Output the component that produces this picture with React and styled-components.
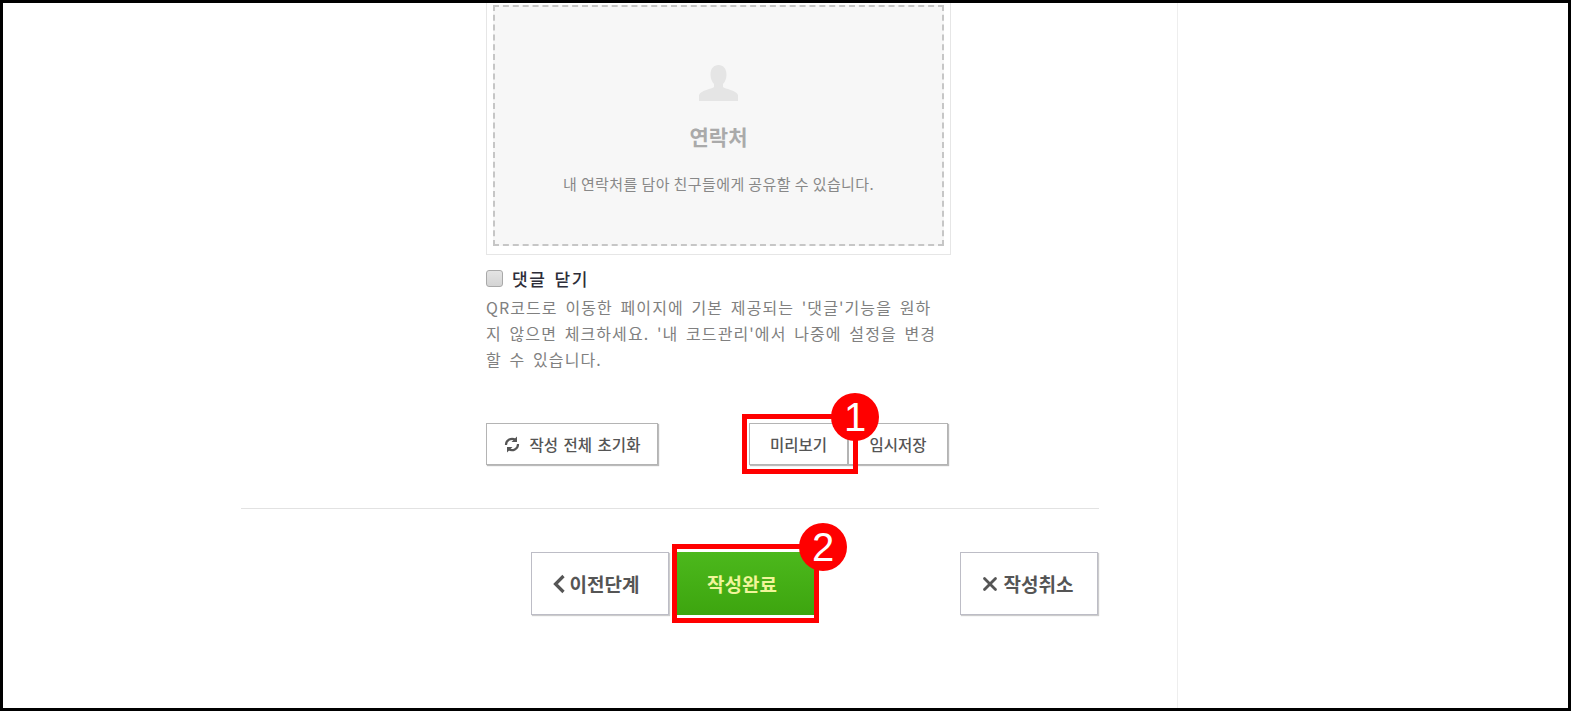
import React from "react";
import styled, { createGlobalStyle } from "styled-components";
import { X } from "lucide-react";

const Global = createGlobalStyle`
  html, body { margin: 0; padding: 0; background: #fff; }
  body { font-family: "Noto Sans CJK KR", "Noto Sans", sans-serif; }
`;
const Frame = styled.div`
  position: relative; box-sizing: border-box; width: 1571px; height: 711px;
  border: 3px solid #000; overflow: hidden; background: #fff;
`;
const Main = styled.main`
  display: flow-root; box-sizing: border-box; width: 1175px; height: 100%;
  border-right: 1px solid #eee; padding-left: 238px;
`;
const Inner = styled.div` width: 858px; `;
const FormBlock = styled.section`
  width: 465px; margin-left: 245px; margin-top: -5px;
`;
const UploadFrame = styled.div`
  border: 1px solid #e6e6e6; padding: 6px 6px 8px; 
`;
const Drop = styled.div`
  box-sizing: border-box; height: 241px; border: 2px dashed #c6c6c6; background: #f7f7f7;
  display: flex; flex-direction: column; align-items: center; padding-top: 58px;
`;
const Title = styled.div`
  font-size: 21px; line-height: 28px; font-weight: 700; color: #aaa; margin-top: 21px;
`;
const Desc = styled.div`
  font-size: 15px; line-height: 18px; letter-spacing: 0.4px; color: #888; margin-top: 25px; white-space: nowrap;
`;
const CheckRow = styled.label`
  display: flex; align-items: center; gap: 9px; margin-top: 13px; height: 20px;
`;
const Box = styled.span`
  box-sizing: border-box; width: 17px; height: 17px; border: 1px solid #a9a9a9; border-radius: 3px;
  background: linear-gradient(#e4e4e4, #d4d4d4);
`;
const CheckLabel = styled.span`
  font-size: 17px; font-weight: 500; color: #2d2d38; letter-spacing: 1.5px; word-spacing: 3px;
`;
const Help = styled.p`
  margin: 6px 0 0; font-size: 16px; line-height: 26px; color: #808080; letter-spacing: 1.1px; word-spacing: 3px; white-space: nowrap;
`;
const Actions = styled.div`
  display: flex; justify-content: space-between; width: 462px; margin-top: 51px;
`;
const Group = styled.div` display: flex; `;
const SmallButton = styled.button`
  box-sizing: border-box; width: ${p => p.$w}px; height: 42px; padding: 0; background: #fff;
  border: 1px solid #b4b4b4; box-shadow: 1px 1px 1px #bbb; font: 500 15.5px "Noto Sans CJK KR", sans-serif;
  color: #555; display: flex; align-items: center; justify-content: center; gap: 10px; word-spacing: 2px;
`;
const Divider = styled.hr`
  border: 0; border-top: 1px solid #e2e2e2; margin: 43px 0 0;
`;
const Nav = styled.nav`
  display: flex; padding-left: 290px; padding-right: 1px; margin-top: 43px;
`;
const NavButton = styled.button`
  box-sizing: border-box; width: 138px; height: 63px; padding: 0 ${p => p.$pr || 6}px 0 0; background: #fff;
  border: 1px solid #bdbdc6; box-shadow: 1px 1px 1px #ccc; font: 700 19px "Noto Sans CJK KR", sans-serif;
  color: #555; display: flex; align-items: center; justify-content: center; gap: ${p => p.$gap || 3}px;
  ${p => p.$end && "margin-left: auto;"}
`;
const DoneButton = styled(NavButton)`
  margin-left: 7px; border: 0; box-shadow: none; color: #f0f59a;
  background: linear-gradient(#4cb81c, #3da50f);
`;
const Mark = styled.div`
  position: absolute; box-sizing: border-box; border: 5px solid #f00; pointer-events: none;
  left: ${p => p.$x}px; top: ${p => p.$y}px; width: ${p => p.$w}px; height: ${p => p.$h}px;
`;
const Badge = styled.div`
  position: absolute; width: 48px; height: 48px; border-radius: 50%; background: #f00; color: #fff;
  left: ${p => p.$x}px; top: ${p => p.$y}px; display: flex; align-items: center; justify-content: center;
  font: 400 40px "Liberation Sans", sans-serif;
`;

const Person = () => (
  <svg width="39" height="36" viewBox="0 0 39 36" fill="#e5e5e5">
    <path d="M19.500 0c5 0 8 4 8 9.500 0 4-1.500 7.500-3.500 9.500v3c2 2 13 3 15 8v6H0v-6c2-5 13-6 15-8v-3c-2-2-3.500-5.500-3.500-9.500C11.500 4 14.500 0 19.500 0z"/>
  </svg>
);
const Sync = () => (
  <svg width="16" height="17" viewBox="0 0 16 17" fill="none" stroke="#555" strokeWidth="2.2">
    <path d="M2 9a6 6 0 0 1 9.500-5"/><path d="M14 8a6 6 0 0 1-9.500 5"/>
    <path d="M13 0.500v5.500H7.500z" fill="#555" stroke="none"/><path d="M3 16.500V11h5.500z" fill="#555" stroke="none"/>
  </svg>
);
const Chevron = () => (
  <svg width="14" height="22" viewBox="0 0 14 22" fill="none" stroke="#555" strokeWidth="3.200">
    <path d="M11.500 3 3.500 11l8 8"/>
  </svg>
);

export default function App() {
  return (
    <Frame>
      <Global />
      <Main>
        <Inner>
          <FormBlock>
            <UploadFrame>
              <Drop>
                <Person />
                <Title>연락처</Title>
                <Desc>내 연락처를 담아 친구들에게 공유할 수 있습니다.</Desc>
              </Drop>
            </UploadFrame>
            <CheckRow><Box /><CheckLabel>댓글 닫기</CheckLabel></CheckRow>
            <Help>
              QR코드로 이동한 페이지에 기본 제공되는 '댓글'기능을 원하<br />
              지 않으면 체크하세요. '내 코드관리'에서 나중에 설정을 변경<br />
              할 수 있습니다.
            </Help>
            <Actions>
              <SmallButton $w={172}><Sync />작성 전체 초기화</SmallButton>
              <Group>
                <SmallButton $w={99}>미리보기</SmallButton>
                <SmallButton $w={100}>임시저장</SmallButton>
              </Group>
            </Actions>
          </FormBlock>
          <Divider />
          <Nav>
            <NavButton $pr={9} $gap={4}><Chevron />이전단계</NavButton>
            <DoneButton>작성완료</DoneButton>
            <NavButton $end><X size={22} strokeWidth={3} />작성취소</NavButton>
          </Nav>
        </Inner>
      </Main>
      <Mark $x={739} $y={411} $w={116} $h={60} />
      <Badge $x={828} $y={390}>1</Badge>
      <Mark $x={669} $y={541} $w={147} $h={79} />
      <Badge $x={796} $y={520}>2</Badge>
    </Frame>
  );
}
